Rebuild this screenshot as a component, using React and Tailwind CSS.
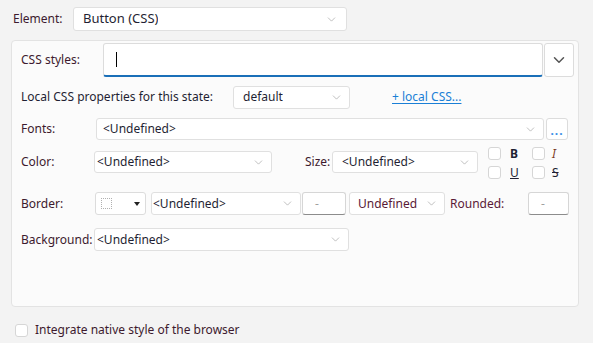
import { ChevronDown } from 'lucide-react';

const font = { fontFamily: '"Segoe UI", "Noto Sans", sans-serif' };

const Select = ({ value, className = '', textClass = 'text-[#1f1f33]' }) => (
    <div className={`flex items-center justify-between bg-white border border-[#e0e0e0] rounded-[3px] pl-1 pr-1.5 ${className}`}>
        <span className={`truncate ${textClass}`}>{value}</span>
        <ChevronDown size={13} strokeWidth={1} className="text-[#8a8a8a] shrink-0" />
    </div>
);

const Check = () => <div className="w-[13px] h-[13px] bg-white border border-[#d6d6d6] rounded-[3px] shrink-0" />;

const SmallInput = ({ className = '' }) => (
    <div className={`bg-white border border-[#d6d6d6] border-b-[#8c8c8c] rounded-[3px] flex items-center pl-3 text-[#a0a0a0] ${className}`}>-</div>
);

export default function App() {
    return (
        <div className="w-[593px] h-[343px] bg-[#f3f3f3] text-[12px] text-[#3d1a2e] overflow-hidden" style={font}>
            {/* Element */}
            <div className="flex items-center h-[24px] mt-[7px] pl-[13px]">
                <span className="w-[60px]">Element:</span>
                <Select value="Button (CSS)" className="w-[274px] h-[24px] pl-[9px] pr-2 text-[13px]" />
            </div>

            {/* Panel */}
            <div className="mt-[9px] ml-[11px] w-[568px] h-[267px] bg-[#fbfbfb] border border-[#e3e3e3] rounded-[4px] pt-[2px] pl-[9px]">
                <div className="flex items-center h-[34px]">
                    <span className="w-[82px]">CSS styles:</span>
                    <div className="w-[440px] h-[34px] bg-white border border-[#dcdcdc] border-b-2 border-b-[#1a6fb8] rounded-[3px] flex items-center pl-[12px]">
                        <div className="w-px h-[15px] bg-black" />
                    </div>
                    <div className="ml-px w-[30px] h-[34px] bg-white border border-[#dcdcdc] rounded-[3px] flex items-center justify-center">
                        <ChevronDown size={18} strokeWidth={2} className="text-[#555]" />
                    </div>
                </div>

                <div className="flex items-center h-[22px] mt-[9px] text-[#1f1f33]">
                    <span className="w-[212px]">Local CSS properties for this state:</span>
                    <Select value="default" className="w-[117px] h-[23px] pl-[9px]" />
                    <span className="ml-[42px] text-[#1a7fd6] underline underline-offset-2">+ local CSS...</span>
                </div>

                <div className="flex items-center h-[22px] mt-[10px]">
                    <span className="w-[75px]">Fonts:</span>
                    <Select value="<Undefined>" className="w-[448px] h-[22px] pl-[6px]" />
                    <div className="ml-[2px] w-[22px] h-[22px] bg-white border border-[#dcdcdc] rounded-[3px] flex items-end justify-center text-[#3a8ee6] font-bold leading-[14px] pb-px tracking-[1px]">...</div>
                </div>

                <div className="flex mt-[11px]">
                    <div className="flex items-center h-[22px]">
                        <span className="w-[73px]">Color:</span>
                        <Select value="<Undefined>" className="w-[178px] h-[22px] pl-[2px]" />
                        <span className="ml-[33px] w-[27px]">Size:</span>
                        <Select value="<Undefined>" className="w-[146px] h-[22px] pl-[9px]" />
                    </div>
                    <div className="ml-[10px] -mt-[4px] flex flex-col gap-[6px] text-[#1f1f33]">
                        <div className="flex items-center h-[13px]">
                            <Check />
                            <span className="ml-[9px] w-[13px] font-bold">B</span>
                            <div className="ml-[9px]"><Check /></div>
                            <span className="ml-[7px] italic text-[#7a3a24]">I</span>
                        </div>
                        <div className="flex items-center h-[13px]">
                            <Check />
                            <span className="ml-[9px] w-[13px] underline">U</span>
                            <div className="ml-[9px]"><Check /></div>
                            <span className="ml-[7px] line-through">S</span>
                        </div>
                    </div>
                </div>

                <div className="flex items-center h-[23px] mt-[13px]">
                    <span className="w-[74px]">Border:</span>
                    <div className="w-[51px] h-[23px] bg-white border border-[#dcdcdc] rounded-[3px] flex items-center justify-between pl-[5px] pr-[5px]">
                        <div className="w-[11px] h-[11px] border border-dotted border-[#b0b0b0]" />
                        <div className="w-0 h-0 border-l-[3px] border-r-[3px] border-t-[4px] border-l-transparent border-r-transparent border-t-[#222]" />
                    </div>
                    <Select value="<Undefined>" className="ml-[5px] w-[150px] h-[23px] pl-[1px]" />
                    <SmallInput className="ml-[1px] w-[44px] h-[23px]" />
                    <Select value="Undefined" textClass="text-[#5a1a36]" className="ml-[3px] w-[96px] h-[23px] pl-[8px]" />
                    <span className="ml-[5px] w-[78px] text-[#5a1a36]">Rounded:</span>
                    <SmallInput className="w-[41px] h-[23px]" />
                </div>

                <div className="flex items-center h-[23px] mt-[13px]">
                    <span className="w-[73px]">Background:</span>
                    <Select value="<Undefined>" className="w-[255px] h-[23px] pl-[2px]" />
                </div>
            </div>

            {/* Integrate */}
            <div className="flex items-center mt-[14px] pl-[15px]">
                <Check />
                <span className="ml-[7px] text-[#3d1a2e]">Integrate native style of the browser</span>
            </div>
        </div>
    );
}
